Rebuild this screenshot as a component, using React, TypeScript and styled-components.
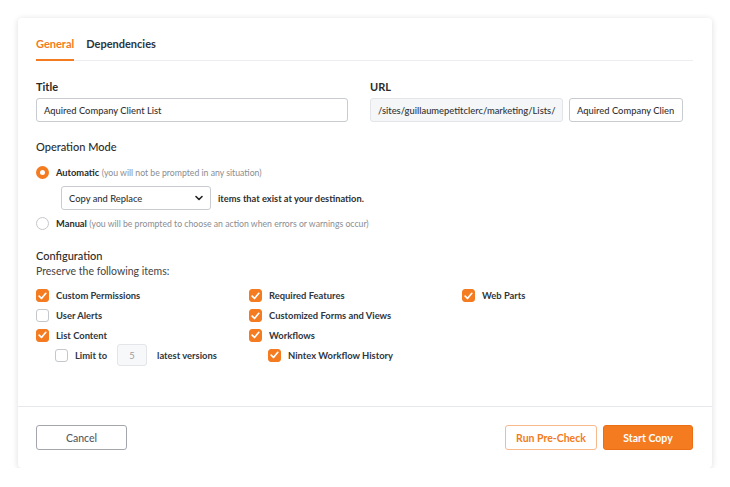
import React from 'react'
import styled, { createGlobalStyle } from 'styled-components'

const ORANGE = '#f47b20'

const GlobalStyle = createGlobalStyle`
    body {
        margin: 0;
        background: #ffffff;
        font-family: Lato, "Open Sans", sans-serif;
        color: #2f2f2f;
    }
`

const Card = styled.div`
    margin: 18px 0 0 18px;
    width: 694px;
    height: 450px;
    background: #fff;
    border-radius: 4px;
    box-shadow: 0 1px 6px rgba(0, 0, 0, 0.14);
    display: flex;
    flex-direction: column;
    box-sizing: border-box;
`

const Body = styled.div`
    flex: 1;
    padding: 0 19px 0 18px;
`

const Tabs = styled.div`
    display: flex;
    gap: 12px;
    height: 42px;
    align-items: flex-end;
    border-bottom: 1px solid #eceef1;
`

const Tab = styled.div<{ $active?: boolean }>`
    font-size: 11px;
    font-weight: 700;
    color: ${p => (p.$active ? ORANGE : '#2b3440')};
    padding-bottom: 9px;
    border-bottom: 2px solid ${p => (p.$active ? ORANGE : 'transparent')};
    margin-bottom: -1px;
`

const FieldRow = styled.div`
    display: grid;
    grid-template-columns: 312px 313px;
    column-gap: 22px;
    margin-top: 19px;
`

const Label = styled.div`
    font-size: 11px;
    font-weight: 700;
    color: #2b2b2b;
    margin-bottom: 5px;
`

const TextBox = styled.div<{ $grey?: boolean; $width?: string }>`
    height: 24px;
    box-sizing: border-box;
    width: ${p => p.$width || '100%'};
    border: 1px solid ${p => (p.$grey ? '#e3e5e8' : '#c8cbcf')};
    background: ${p => (p.$grey ? '#f5f6f7' : '#fff')};
    border-radius: 3px;
    display: flex;
    align-items: center;
    padding: 0 7px;
    font-size: 9.4px;
    font-weight: 500;
    color: #333;
    white-space: nowrap;
    overflow: hidden;
`

const UrlGroup = styled.div`
    display: flex;
    gap: 6px;
`

const SectionTitle = styled.div<{ $top: number }>`
    font-size: 11px;
    color: #2b2b2b;
    font-weight: 500;
    margin-top: ${p => p.$top}px;
`

const RadioRow = styled.div<{ $top: number }>`
    display: flex;
    align-items: center;
    gap: 7px;
    margin-top: ${p => p.$top}px;
    font-size: 9.3px;
`

const RadioDot = styled.span<{ $on?: boolean }>`
    width: 13px;
    height: 13px;
    box-sizing: border-box;
    border-radius: 50%;
    border: ${p => (p.$on ? `4px solid ${ORANGE}` : '1px solid #c4c7cb')};
    background: #fff;
    flex-shrink: 0;
`

const Strong = styled.span`
    font-weight: 700;
    color: #2b2b2b;
`

const Hint = styled.span`
    font-size: 8.7px;
    color: #8a8d91;
`

const ModeLine = styled.div`
    display: flex;
    align-items: center;
    gap: 7px;
    margin: 7px 0 0 25px;
    font-size: 9.3px;
    font-weight: 700;
`

const Select = styled.div`
    width: 150px;
    height: 24px;
    box-sizing: border-box;
    border: 1px solid #c8cbcf;
    border-radius: 3px;
    display: flex;
    align-items: center;
    justify-content: space-between;
    padding: 0 7px;
    font-size: 9.4px;
    font-weight: 500;
    color: #333;
`

const Sub = styled.div`
    font-size: 10.5px;
    color: #444;
    margin-top: 3px;
`

const Grid = styled.div`
    display: grid;
    grid-template-columns: 213px 213px 1fr;
    margin-top: 9px;
`

const Column = styled.div`
    display: flex;
    flex-direction: column;
`

const CheckRow = styled.div<{ $indent?: boolean }>`
    display: flex;
    align-items: center;
    gap: 7px;
    height: 19.8px;
    padding-left: ${p => (p.$indent ? '19px' : '0')};
    font-size: 9.4px;
    font-weight: 700;
    color: #2f3640;
`

const Box = styled.span<{ $on?: boolean }>`
    width: 13px;
    height: 13px;
    box-sizing: border-box;
    border-radius: 3px;
    border: 1px solid ${p => (p.$on ? ORANGE : '#c4c7cb')};
    background: ${p => (p.$on ? ORANGE : '#fff')};
    display: inline-flex;
    align-items: center;
    justify-content: center;
    flex-shrink: 0;
`

const LimitRow = styled(CheckRow)`
    height: 20px;
    margin-top: 0;
`

const NumberBox = styled.span`
    width: 30px;
    height: 22px;
    box-sizing: border-box;
    border: 1px solid #e3e5e8;
    background: #f7f8f9;
    border-radius: 3px;
    display: inline-flex;
    align-items: center;
    justify-content: center;
    font-weight: 400;
    color: #9a9da1;
    margin: 0 3px;
`

const Footer = styled.div`
    height: 61px;
    border-top: 1px solid #e6e8eb;
    display: flex;
    align-items: center;
    padding: 0 19px 0 18px;
    gap: 6px;
`

const Button = styled.button<{ $kind: 'plain' | 'outline' | 'fill' }>`
    height: 25px;
    width: ${p => (p.$kind === 'plain' ? '91px' : p.$kind === 'outline' ? '92px' : '90px')};
    border-radius: 3px;
    font-family: inherit;
    font-size: 10.5px;
    cursor: pointer;
    border: 1px solid ${p => (p.$kind === 'plain' ? '#a3a7ad' : p.$kind === 'outline' ? '#f8b98d' : '#ea6f14')};
    background: ${p => (p.$kind === 'fill' ? ORANGE : '#fff')};
    color: ${p => (p.$kind === 'plain' ? '#555b63' : p.$kind === 'outline' ? ORANGE : '#fff')};
    font-weight: ${p => (p.$kind === 'plain' ? 500 : 700)};
`

const Spacer = styled.div`
    flex: 1;
`

const Tick = () => (
    <svg width="9" height="8" viewBox="0 0 9 8">
        <polyline points="1.2,4.2 3.5,6.5 7.8,1.3" fill="none" stroke="#fff" strokeWidth="1.7" strokeLinecap="round" strokeLinejoin="round" />
    </svg>
)

const Chevron = () => (
    <svg width="8" height="6" viewBox="0 0 8 6">
        <polyline points="1,1.5 4,4.5 7,1.5" fill="none" stroke="#222" strokeWidth="1.6" strokeLinecap="round" strokeLinejoin="round" />
    </svg>
)

interface CheckProps {
    label: string
    on?: boolean
    indent?: boolean
}

const Check = ({ label, on, indent }: CheckProps) => (
    <CheckRow $indent={indent}>
        <Box $on={on}>{on ? <Tick /> : null}</Box>
        {label}
    </CheckRow>
)

export default function App() {
    return (
        <>
            <GlobalStyle />
            <Card>
                <Body>
                    <Tabs>
                        <Tab $active>General</Tab>
                        <Tab>Dependencies</Tab>
                    </Tabs>

                    <FieldRow>
                        <div>
                            <Label>Title</Label>
                            <TextBox>Aquired Company Client List</TextBox>
                        </div>
                        <div>
                            <Label>URL</Label>
                            <UrlGroup>
                                <TextBox $grey $width="193px">/sites/guillaumepetitclerc/marketing/Lists/</TextBox>
                                <TextBox $width="114px">Aquired Company Clien</TextBox>
                            </UrlGroup>
                        </div>
                    </FieldRow>

                    <SectionTitle $top={18}>Operation Mode</SectionTitle>
                    <RadioRow $top={13}>
                        <RadioDot $on />
                        <span>
                            <Strong>Automatic</Strong> <Hint>(you will not be prompted in any situation)</Hint>
                        </span>
                    </RadioRow>
                    <ModeLine>
                        <Select>
                            Copy and Replace
                            <Chevron />
                        </Select>
                        items that exist at your destination.
                    </ModeLine>
                    <RadioRow $top={7}>
                        <RadioDot />
                        <span>
                            <Strong>Manual</Strong> <Hint>(you will be prompted to choose an action when errors or warnings occur)</Hint>
                        </span>
                    </RadioRow>

                    <SectionTitle $top={19}>Configuration</SectionTitle>
                    <Sub>Preserve the following items:</Sub>
                    <Grid>
                        <Column>
                            <Check label="Custom Permissions" on />
                            <Check label="User Alerts" />
                            <Check label="List Content" on />
                            <LimitRow $indent>
                                <Box />
                                Limit to
                                <NumberBox>5</NumberBox>
                                latest versions
                            </LimitRow>
                        </Column>
                        <Column>
                            <Check label="Required Features" on />
                            <Check label="Customized Forms and Views" on />
                            <Check label="Workflows" on />
                            <Check label="Nintex Workflow History" on indent />
                        </Column>
                        <Column>
                            <Check label="Web Parts" on />
                        </Column>
                    </Grid>
                </Body>
                <Footer>
                    <Button $kind="plain">Cancel</Button>
                    <Spacer />
                    <Button $kind="outline">Run Pre-Check</Button>
                    <Button $kind="fill">Start Copy</Button>
                </Footer>
            </Card>
        </>
    )
}
